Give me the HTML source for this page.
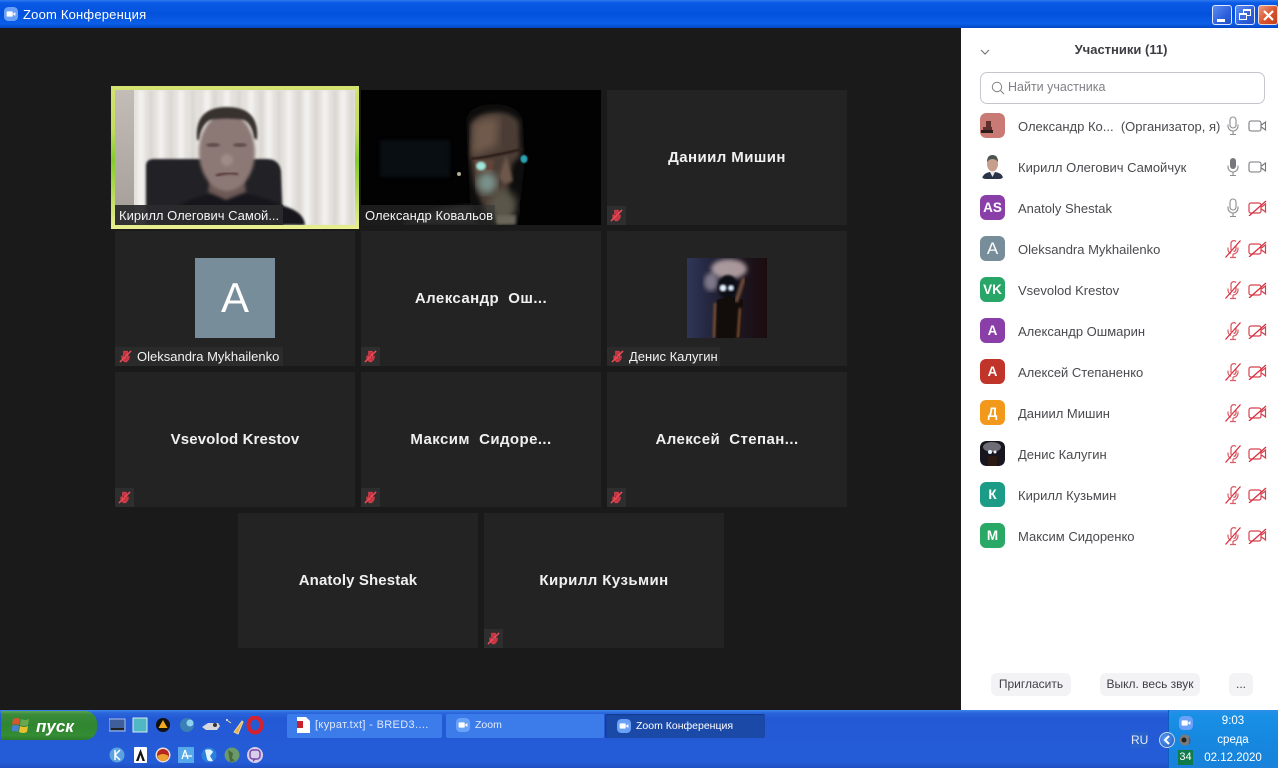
<!DOCTYPE html>
<html lang="ru"><head><meta charset="utf-8"><title>Zoom Конференция</title>
<style>
*{box-sizing:border-box}
html,body{margin:0;padding:0;width:1278px;height:768px;overflow:hidden;background:#1a1a1a;font-family:"Liberation Sans",sans-serif}
.a{position:absolute}
#title{left:0;top:0;width:1278px;height:28px;background:linear-gradient(#2f7bf0 0,#0a5ae6 10%,#0452dc 50%,#0a5ee8 85%,#0346c4 100%)}
#title .t{left:23px;top:7px;color:#fff;font-size:13px;letter-spacing:.2px;line-height:16px;white-space:nowrap}
.tile{position:absolute;width:240px;height:135px;background:#232323}
.nm{position:absolute;left:0;right:0;top:59px;text-align:center;color:#f0f0f0;font-weight:700;font-size:15px;letter-spacing:.42px;line-height:18px;white-space:pre}
.nm.l{letter-spacing:.12px}
.lab{position:absolute;left:0;bottom:0;height:19px;background:rgba(44,44,44,.9);color:#f2f2f2;font-size:13px;line-height:19px;white-space:nowrap}
.mt{position:absolute;left:0;bottom:0;width:19px;height:19px;background:#2e2e2e}
#panel{left:961px;top:28px;width:317px;height:682px;background:#fff}
.row{position:absolute;left:980px;width:290px;height:26px}
.av{position:absolute;left:0;top:0;width:25px;height:25px;border-radius:6px;color:#fff;font-weight:700;font-size:13.5px;line-height:25px;text-align:center}
.rn{position:absolute;left:38px;top:5px;font-size:13px;line-height:17px;color:#4a4a4f;white-space:pre}
.ic{position:absolute;top:3px}
.btn{position:absolute;top:673px;height:23px;background:#f3f3f6;border-radius:6px;color:#404046;font-size:12px;line-height:23px;text-align:center}
#tb{left:0;top:710px;width:1278px;height:58px;background:linear-gradient(#3d85ec 0,#2a66db 5%,#2459d4 14%,#245cd8 90%,#1d4fc0 100%)}
.task{position:absolute;top:714px;height:24px;border-radius:2px;color:#fff;font-size:10.5px;line-height:23px;white-space:nowrap}
</style></head><body>
<svg width="0" height="0" style="position:absolute"><defs>
<symbol id="vz" viewBox="0 0 16 16"><rect x="0" y="0" width="16" height="16" rx="5" fill="#6aa1f8"/><rect x="3" y="5" width="7" height="6" rx="1" fill="#fff"/><path d="M10.5 7.5L13 5.8v4.4L10.5 8.5z" fill="#fff"/></symbol>
<symbol id="mic" viewBox="0 0 16 20"><rect x="5" y="1" width="6" height="11" rx="3" fill="none" stroke="#8d8d92" stroke-width="1.1"/><path d="M3 8.5v1.5a5 5 0 0 0 10 0V8.500M8 15v3M5 18.500h6" fill="none" stroke="#8d8d92" stroke-width="1.1"/></symbol>
<symbol id="micf" viewBox="0 0 16 20"><rect x="5" y="1" width="6" height="11" rx="3" fill="#77777c"/><path d="M3 8.5v1.5a5 5 0 0 0 10 0V8.500M8 15v3M5 18.500h6" fill="none" stroke="#8d8d92" stroke-width="1.1"/></symbol>
<symbol id="cam" viewBox="0 0 20 16"><rect x="1" y="3" width="12" height="10" rx="2" fill="none" stroke="#77777c" stroke-width="1.1"/><path d="M13.500 7L17.500 4v8l-4-3" fill="none" stroke="#77777c" stroke-width="1.1"/></symbol>
<symbol id="camx" viewBox="0 0 20 16"><rect x="1" y="3" width="12" height="10" rx="2" fill="none" stroke="#d8404e" stroke-width="1.2"/><path d="M13.500 7L17.500 4v8l-4-3" fill="none" stroke="#d8404e" stroke-width="1.2"/><path d="M1 16L18 1" stroke="#d9303f" stroke-width="1.3"/></symbol>
<symbol id="micx" viewBox="0 0 16 20"><path d="M6 11V4a3 3 0 0 1 5-1.500M11 7v3a3 3 0 0 1-2.500 2.500" fill="none" stroke="#dd5a66" stroke-width="1.3"/><path d="M3 8.500v1.500a5 5 0 0 0 3 4.500M13 8.500v1.500a5 5 0 0 1-5 5M8 15v3M5 18.500h6" fill="none" stroke="#dd5a66" stroke-width="1.2"/><path d="M.5 18.500L15.500 1.500" stroke="#d9303f" stroke-width="1.3"/></symbol>
<symbol id="mm" viewBox="0 0 14 14"><path d="M5 1.500h4v7H5z M3 6v2a4 4 0 0 0 8 0V6M5 12.500h4" fill="#c8323f" stroke="#d0404c" stroke-width="1"/><path d="M1 13L13 1" stroke="#ef4b5a" stroke-width="1.6"/></symbol>
<filter id="b1"><feGaussianBlur stdDeviation="1"/></filter>
<filter id="b15"><feGaussianBlur stdDeviation="1.6"/></filter>
<filter id="b2"><feGaussianBlur stdDeviation="2.500"/></filter>
<filter id="b3"><feGaussianBlur stdDeviation="4"/></filter>
<filter id="b5"><feGaussianBlur stdDeviation=".7"/></filter>
</defs></svg>

<div class="a" id="title">
<svg class="a" style="left:4px;top:7px" width="14" height="14"><use href="#vz"/></svg>
<div class="a t">Zoom Конференция</div>
<div class="a" style="left:1212px;top:5px;width:20px;height:20px;border:1px solid #dfe8ff;border-radius:3px;background:linear-gradient(135deg,#5d8df2,#2e5fdc 60%,#2250c8)"><div class="a" style="left:4px;top:13px;width:8px;height:3px;background:#fff"></div></div>
<div class="a" style="left:1235px;top:5px;width:20px;height:20px;border:1px solid #dfe8ff;border-radius:3px;background:linear-gradient(135deg,#5d8df2,#2e5fdc 60%,#2250c8)"><div class="a" style="left:7px;top:3px;width:8px;height:7px;border:1px solid #fff;border-top-width:2px"></div><div class="a" style="left:3px;top:7px;width:8px;height:7px;border:1px solid #fff;border-top-width:2px;background:#3f6de0"></div></div>
<div class="a" style="left:1258px;top:5px;width:20px;height:20px;border:1px solid #f0d8d0;border-radius:3px;background:linear-gradient(135deg,#ea9a80,#d8532c 55%,#c23e1c)"><svg class="a" style="left:3px;top:3px" width="13" height="13"><path d="M2 2L11 11M11 2L2 11" stroke="#fff" stroke-width="2.200"/></svg></div>
</div>

<!-- active speaker -->
<div class="a" style="left:111px;top:86px;width:248px;height:143px;background:linear-gradient(#d4e272 0,#c4dc60 30%,#84cc2c 52%,#a8d648 68%,#eaee92 100%)"></div>
<svg class="a" style="left:115px;top:90px" width="240" height="135" viewBox="0 0 240 135">
<defs><linearGradient id="wl" x1="0" x2="0" y1="0" y2="1"><stop offset="0" stop-color="#c4bcb6"/><stop offset="1" stop-color="#a49c96"/></linearGradient></defs>
<rect width="240" height="135" fill="#e4e1dd"/>
<rect x="0" y="0" width="19" height="135" fill="url(#wl)"/>
<g filter="url(#b15)">
<g stroke="#f3f2ef" stroke-width="6"><path d="M26 0v135M46 0v135M66 0v135M92 0v60M112 0v20M136 0v60M154 0v135M174 0v135M192 0v135M210 0v135M228 0v135"/></g>
<g stroke="#d8d4ce" stroke-width="3"><path d="M36 0v135M56 0v135M78 0v135M100 0v30M124 0v30M146 0v135M164 0v135M184 0v135M201 0v135M220 0v135M237 0v135"/></g>
</g>
<path d="M31 135V76q0-7 8-7h113q12 0 14 12l2 54z" fill="#232327" filter="url(#b1)"/>
<path d="M45 135q12-26 62-33h12q30 4 50 14 20 6 21 19z" fill="#19191c" filter="url(#b1)"/>
<path d="M95 88h34l2 14-20 8-18-8z" fill="#6c5854" filter="url(#b15)"/>
<ellipse cx="112" cy="62" rx="28" ry="39" fill="#8c7874" filter="url(#b15)"/>
<path d="M82 50q-3-33 30-33 33 0 30 33l-3-2q-2-14-10-18-17-3-34 0-9 5-11 20z" fill="#37302f" filter="url(#b1)"/>
<ellipse cx="98" cy="55" rx="7" ry="2" fill="#5e4c48" filter="url(#b1)"/>
<ellipse cx="125" cy="55" rx="7" ry="2" fill="#5e4c48" filter="url(#b1)"/>
<path d="M101 86q12-5 22-2" stroke="#5a3e3e" stroke-width="3" fill="none" filter="url(#b1)"/>
<ellipse cx="112" cy="70" rx="6" ry="6" fill="#a08c86" filter="url(#b15)"/>
<rect x="0" y="115" width="168" height="20" fill="#2b2b2e" opacity=".95"/>
<text x="4" y="130" fill="#f4f4f4" font-family="Liberation Sans" font-size="13">Кирилл Олегович Самой...</text>
</svg>

<!-- second video -->
<svg class="a" style="left:361px;top:90px" width="240" height="135" viewBox="0 0 240 135">
<rect width="240" height="135" fill="#020203"/>
<rect x="19" y="50" width="70" height="37" fill="#0a181c" opacity=".6" filter="url(#b2)"/>
<path d="M105 30q3-16 30-16 22 1 27 16l2 40-4 40-20 25h-30z" fill="#0c0908" filter="url(#b3)"/>
<path d="M110 34q8-12 26-12 16 1 22 10l1 34-8 8-6 40-20 10-12-30-4-30z" fill="#4c3c34" filter="url(#b2)"/>
<path d="M112 34q12-8 26-6l-2 28-25 10z" fill="#705a4c" filter="url(#b3)"/>
<path d="M110 69q18-2 52-10" stroke="#2a1e18" stroke-width="2.500" fill="none" filter="url(#b5)"/>
<path d="M113 70h20l-2 13h-16z" fill="#6c4a3a" opacity=".7" filter="url(#b1)"/>
<ellipse cx="120" cy="76" rx="5" ry="4.500" fill="#9fe6dc" filter="url(#b1)"/>
<ellipse cx="163" cy="69" rx="3.500" ry="4" fill="#2aa3b4" filter="url(#b5)"/>
<path d="M145 65l7 26-8 3-6-6z" fill="#6e594c" filter="url(#b15)"/>
<ellipse cx="126" cy="93" rx="10" ry="11" fill="#86a8a2" opacity=".8" filter="url(#b3)"/>
<ellipse cx="142" cy="116" rx="14" ry="16" fill="#5a564a" filter="url(#b3)"/>
<rect x="135" y="125" width="20" height="10" fill="#6a665a" filter="url(#b15)"/>
<circle cx="98" cy="84" r="2" fill="#b4ad94"/>
<path d="M40 135q30-18 70-20l5 20z" fill="#232320" filter="url(#b2)"/>
<rect x="0" y="115" width="134" height="20" fill="#333" opacity=".55"/>
<text x="4" y="130" fill="#f4f4f4" font-family="Liberation Sans" font-size="13" letter-spacing=".05">Олександр Ковальов</text>
</svg>

<div class="tile" style="left:607px;top:90px"><div class="nm">Даниил Мишин</div><div class="mt"><svg class="a" style="left:3px;top:3px" width="13" height="13"><use href="#mm"/></svg></div></div>

<div class="tile" style="left:115px;top:231px">
<div class="a" style="left:80px;top:27px;width:80px;height:80px;background:#778d99;color:#fff;font-size:42px;line-height:80px;text-align:center">A</div>
<div class="lab" style="width:168px;padding-left:22px">Oleksandra Mykhailenko</div><svg class="a" style="left:4px;top:119px" width="13" height="13"><use href="#mm"/></svg></div>
<div class="tile" style="left:361px;top:231px"><div class="nm">Александр  Ош...</div><div class="mt"><svg class="a" style="left:3px;top:3px" width="13" height="13"><use href="#mm"/></svg></div></div>
<div class="tile" style="left:607px;top:231px">
<svg class="a" style="left:80px;top:27px" width="80" height="80" viewBox="0 0 80 80">
<defs><linearGradient id="dg" x1="0" x2="1"><stop offset="0" stop-color="#2f3658"/><stop offset=".5" stop-color="#1c1a2a"/><stop offset="1" stop-color="#1c0c0e"/></linearGradient></defs>
<rect width="80" height="80" fill="url(#dg)"/>
<ellipse cx="42" cy="11" rx="18" ry="10" fill="#c2aeb0" opacity=".85" filter="url(#b2)"/>
<ellipse cx="24" cy="24" rx="7" ry="9" fill="#a49aa8" opacity=".7" filter="url(#b2)"/>
<ellipse cx="41" cy="29" rx="10" ry="12" fill="#0c0e12" filter="url(#b1)"/>
<path d="M28 80l2-38 12-4 14 4-2 38z" fill="#120c0a"/>
<path d="M28 45l-1 35M53 50l-2 30" stroke="#7a5030" stroke-width="2.500" filter="url(#b1)"/>
<path d="M57 20l-8 24" stroke="#6a4a38" stroke-width="4" filter="url(#b1)"/>
<circle cx="36" cy="30" r="3.500" fill="#e6f3ff" filter="url(#b1)"/><circle cx="44" cy="30" r="3" fill="#d8ecff" filter="url(#b1)"/>
</svg>
<div class="lab" style="width:113px;padding-left:22px">Денис Калугин</div><svg class="a" style="left:4px;top:119px" width="13" height="13"><use href="#mm"/></svg></div>

<div class="tile" style="left:115px;top:372px"><div class="nm l">Vsevolod Krestov</div><div class="mt"><svg class="a" style="left:3px;top:3px" width="13" height="13"><use href="#mm"/></svg></div></div>
<div class="tile" style="left:361px;top:372px"><div class="nm">Максим  Сидоре...</div><div class="mt"><svg class="a" style="left:3px;top:3px" width="13" height="13"><use href="#mm"/></svg></div></div>
<div class="tile" style="left:607px;top:372px"><div class="nm">Алексей  Степан...</div><div class="mt"><svg class="a" style="left:3px;top:3px" width="13" height="13"><use href="#mm"/></svg></div></div>
<div class="tile" style="left:238px;top:513px"><div class="nm l">Anatoly Shestak</div></div>
<div class="tile" style="left:484px;top:513px"><div class="nm">Кирилл Кузьмин</div><div class="mt"><svg class="a" style="left:3px;top:3px" width="13" height="13"><use href="#mm"/></svg></div></div>

<!-- panel -->
<div class="a" id="panel"></div>
<svg class="a" style="left:980px;top:48px" width="10" height="8"><path d="M1 2l4 4 4-4" fill="none" stroke="#77777c" stroke-width="1.200"/></svg>
<div class="a" style="left:961px;top:42px;width:320px;text-align:center;font-size:13px;font-weight:700;color:#3c3c42;line-height:16px">Участники (11)</div>
<div class="a" style="left:980px;top:72px;width:285px;height:32px;border:1px solid #c6c6cc;border-radius:7px;background:#fff"></div>
<svg class="a" style="left:991px;top:81px" width="14" height="14"><circle cx="6" cy="6" r="4.700" fill="none" stroke="#808086" stroke-width="1"/><path d="M9.500 9.500L13 13" stroke="#808086" stroke-width="1"/></svg>
<div class="a" style="left:1008px;top:79px;font-size:12.5px;color:#808086;line-height:17px">Найти участника</div>

<div class="row" style="top:113px"><svg class="av" viewBox="0 0 25 25"><rect width="25" height="25" rx="6" fill="#c97a74"/><path d="M6 8h5v6h1v6H3v-6h3z" fill="#5e2f2c"/><rect x="1" y="17" width="12" height="3" fill="#2a1c1c"/></svg><div class="rn">Олександр Ко...  (Организатор, я)</div><svg class="ic" style="left:245px" width="16" height="20"><use href="#mic"/></svg><svg class="ic" style="left:268px;top:5px" width="20" height="16"><use href="#cam"/></svg></div>
<div class="row" style="top:154px"><svg class="av" viewBox="0 0 25 25"><rect width="25" height="25" fill="#fff"/><path d="M2 25q1-6 8-7h5q8 1 8 7z" fill="#2a3448"/><ellipse cx="12.500" cy="10" rx="5.500" ry="7.500" fill="#c79f8c"/><path d="M7 8q0-7 5.500-7T18 8q-2-3-5.500-3T7 8z" fill="#4a5550"/><path d="M10 18l2.500 5 2.500-5z" fill="#e8e8e8"/></svg><div class="rn">Кирилл Олегович Самойчук</div><svg class="ic" style="left:245px" width="16" height="20"><use href="#micf"/></svg><svg class="ic" style="left:268px;top:5px" width="20" height="16"><use href="#cam"/></svg></div>
<div class="row" style="top:195px"><div class="av" style="background:#8a3fa8">AS</div><div class="rn">Anatoly Shestak</div><svg class="ic" style="left:245px" width="16" height="20"><use href="#mic"/></svg><svg class="ic" style="left:268px;top:5px" width="20" height="16"><use href="#camx"/></svg></div>
<div class="row" style="top:236px"><div class="av" style="background:#778d99;font-size:17px;font-weight:400">A</div><div class="rn">Oleksandra Mykhailenko</div><svg class="ic" style="left:245px" width="16" height="20"><use href="#micx"/></svg><svg class="ic" style="left:268px;top:5px" width="20" height="16"><use href="#camx"/></svg></div>
<div class="row" style="top:277px"><div class="av" style="background:#27a668">VK</div><div class="rn">Vsevolod Krestov</div><svg class="ic" style="left:245px" width="16" height="20"><use href="#micx"/></svg><svg class="ic" style="left:268px;top:5px" width="20" height="16"><use href="#camx"/></svg></div>
<div class="row" style="top:318px"><div class="av" style="background:#8a3fa8">А</div><div class="rn">Александр Ошмарин</div><svg class="ic" style="left:245px" width="16" height="20"><use href="#micx"/></svg><svg class="ic" style="left:268px;top:5px" width="20" height="16"><use href="#camx"/></svg></div>
<div class="row" style="top:359px"><div class="av" style="background:#c0342a">А</div><div class="rn">Алексей Степаненко</div><svg class="ic" style="left:245px" width="16" height="20"><use href="#micx"/></svg><svg class="ic" style="left:268px;top:5px" width="20" height="16"><use href="#camx"/></svg></div>
<div class="row" style="top:400px"><div class="av" style="background:#f2991c">Д</div><div class="rn">Даниил Мишин</div><svg class="ic" style="left:245px" width="16" height="20"><use href="#micx"/></svg><svg class="ic" style="left:268px;top:5px" width="20" height="16"><use href="#camx"/></svg></div>
<div class="row" style="top:441px"><svg class="av" viewBox="0 0 25 25"><rect width="25" height="25" rx="6" fill="#17161f"/><ellipse cx="12" cy="6" rx="9" ry="5" fill="#8f8a96" opacity=".75"/><circle cx="10" cy="11" r="2" fill="#e8f2ff"/><circle cx="15" cy="11" r="1.500" fill="#e8f2ff"/><path d="M8 15h9v10H8z" fill="#2b1a14"/></svg><div class="rn">Денис Калугин</div><svg class="ic" style="left:245px" width="16" height="20"><use href="#micx"/></svg><svg class="ic" style="left:268px;top:5px" width="20" height="16"><use href="#camx"/></svg></div>
<div class="row" style="top:482px"><div class="av" style="background:#1c9c86">К</div><div class="rn">Кирилл Кузьмин</div><svg class="ic" style="left:245px" width="16" height="20"><use href="#micx"/></svg><svg class="ic" style="left:268px;top:5px" width="20" height="16"><use href="#camx"/></svg></div>
<div class="row" style="top:523px"><div class="av" style="background:#2aa865">М</div><div class="rn">Максим Сидоренко</div><svg class="ic" style="left:245px" width="16" height="20"><use href="#micx"/></svg><svg class="ic" style="left:268px;top:5px" width="20" height="16"><use href="#camx"/></svg></div>

<div class="btn" style="left:991px;width:80px">Пригласить</div>
<div class="btn" style="left:1100px;width:100px">Выкл. весь звук</div>
<div class="btn" style="left:1229px;width:24px">...</div>

<!-- taskbar -->
<div class="a" id="tb"></div>
<div class="a" style="left:1px;top:711px;width:96px;height:29px;border-radius:0 12px 12px 0;background:linear-gradient(#57a657 0,#3a8a3a 12%,#2f862f 50%,#348c34 85%,#2a7a2a 100%)"></div>
<svg class="a" style="left:12px;top:716px" width="18" height="18"><path d="M1 3q4-2 7 0l-1 6q-3-2-7 0z" fill="#d8552f"/><path d="M9 3q4 2 8 0l-1 6q-4 2-8 0z" fill="#6aa84f"/><path d="M0 10q3-2 7 0l-1 6q-3-2-7 0z" fill="#4a80d0"/><path d="M8 10q4 2 8 0l-1 6q-4 2-8 0z" fill="#e8c030"/></svg>
<div class="a" style="left:36px;top:717px;font-size:17px;font-style:italic;font-weight:700;color:#fff;line-height:20px">пуск</div>

<!-- quick launch row 1 -->
<svg class="a" style="left:109px;top:716px" width="160" height="20" viewBox="0 0 160 20">
<rect x="0" y="3" width="16" height="12" fill="#3e5f9c" stroke="#a7c0ea"/><rect x="2" y="12" width="13" height="2" fill="#222"/>
<rect x="24" y="2" width="14" height="14" fill="#4fb8c4" stroke="#d7eaf5"/>
<circle cx="54" cy="9" r="7" fill="#111"/><path d="M54 4l4.500 8h-9z" fill="#f2a91d"/>
<circle cx="78" cy="9" r="7" fill="#3a7fb5"/><circle cx="81" cy="7" r="3.500" fill="#8fd0ec"/>
<path d="M93 11l6-4h10l2 3-3 4H97z" fill="#d7d7df"/><circle cx="106" cy="9" r="2" fill="#333"/>
<path d="M119 5l3 2M125 16l8-11 1 1-5 12z" stroke="#f2d9a0" fill="#e6b04a"/><circle cx="118" cy="4" r="1" fill="#fff"/>
<ellipse cx="146" cy="9" rx="6.500" ry="7.500" fill="none" stroke="#d6222e" stroke-width="4"/>
</svg>
<!-- quick launch row 2 -->
<svg class="a" style="left:109px;top:746px" width="160" height="20" viewBox="0 0 160 20">
<circle cx="8" cy="9" r="7.500" fill="#5aa2e0"/><path d="M6 4v10M6 9l5-5M6 9l5 5" stroke="#fff" stroke-width="1.500" fill="none"/>
<rect x="25" y="1" width="13" height="16" rx="1" fill="#fff"/><path d="M31.500 3l-4.500 12h2.500l2-6 2 6h2.500z" fill="#111"/>
<circle cx="54" cy="9" r="7.500" fill="#e8e0d8"/><circle cx="54" cy="9" r="6" fill="#b52820"/><path d="M48.500 10q5.500-4 11 0-1 5-5.500 5t-5.500-5z" fill="#f0a030"/>
<rect x="69" y="1" width="16" height="16" fill="#55a8ea"/><path d="M76 4l-3 9M76 4l3 9M74 10h9" stroke="#fff" stroke-width="1.300" fill="none"/>
<circle cx="100" cy="9" r="7.500" fill="#2a80dc"/><path d="M96 4q6-2 8 2l-3 4 3 5q-5 1-6-2z" fill="#e4f2fc"/>
<circle cx="123" cy="9" r="7.500" fill="#6a9a6a"/><path d="M119 4l5 3-1 5 3 3-5 1z" fill="#4a6a3a"/>
<circle cx="146" cy="9" r="8" fill="#d8cdea"/><rect x="141" y="4" width="10" height="9" rx="3" fill="none" stroke="#7a4aa8" stroke-width="1.500"/><path d="M144 13v3l3-3" fill="#7a4aa8"/>
</svg>

<div class="task" style="left:287px;width:155px;background:#3c7bea;padding-left:28px;color:#dfe8fb;font-size:11px;letter-spacing:.35px">[курат.txt] - BRED3....</div>
<svg class="a" style="left:296px;top:717px" width="15" height="16"><path d="M1 0h9l4 4v12H1z" fill="#fff"/><rect x="1" y="4" width="6" height="7" fill="#c8202c"/></svg>
<div class="task" style="left:446px;width:158px;background:#3c7bea;padding-left:29px;color:#e4ecfc">Zoom</div>
<svg class="a" style="left:456px;top:718px" width="14" height="14"><use href="#vz"/></svg>
<div class="task" style="left:605px;width:160px;background:#1a49a8;padding-left:31px;box-shadow:inset 1px 1px 1px #143b8c;line-height:25px">Zoom Конференция</div>
<svg class="a" style="left:617px;top:719px" width="14" height="14"><use href="#vz"/></svg>

<div class="a" style="left:1168px;top:710px;width:110px;height:58px;background:linear-gradient(#2c8ee8,#1990e6 8%,#1688e0 50%,#1a82da);border-left:1px solid #0f5cc0"></div>
<div class="a" style="left:1131px;top:732px;width:17px;height:16px;background:#2a62cc;color:#e0e8fa;font-size:12px;line-height:16px;text-align:center">RU</div>
<div class="a" style="left:1159px;top:732px;width:16px;height:16px;border-radius:50%;background:radial-gradient(circle at 40% 40%,#5aa0ee,#1c52c4);border:1px solid #c4d8f6"></div>
<svg class="a" style="left:1163px;top:735px" width="8" height="10"><path d="M6 1L2 5l4 4" fill="none" stroke="#fff" stroke-width="2"/></svg>
<svg class="a" style="left:1179px;top:716px" width="14" height="14"><use href="#vz"/></svg>
<svg class="a" style="left:1178px;top:733px" width="15" height="15"><circle cx="7" cy="7" r="5.500" fill="#7a7a7a"/><circle cx="6" cy="7" r="2.500" fill="#222"/><path d="M11 11q2-3 0-6" stroke="#2a50c0" fill="none"/></svg>
<div class="a" style="left:1178px;top:750px;width:15px;height:15px;background:#0f7a4a;color:#fff;font-size:11px;line-height:15px;text-align:center">34</div>
<div class="a" style="left:1198px;top:714px;width:70px;text-align:center;color:#fff;font-size:11.5px;line-height:14px">9:03</div>
<div class="a" style="left:1198px;top:733px;width:70px;text-align:center;color:#fff;font-size:11.5px;line-height:14px">среда</div>
<div class="a" style="left:1198px;top:751px;width:70px;text-align:center;color:#fff;font-size:11.5px;line-height:14px">02.12.2020</div>
</body></html>
